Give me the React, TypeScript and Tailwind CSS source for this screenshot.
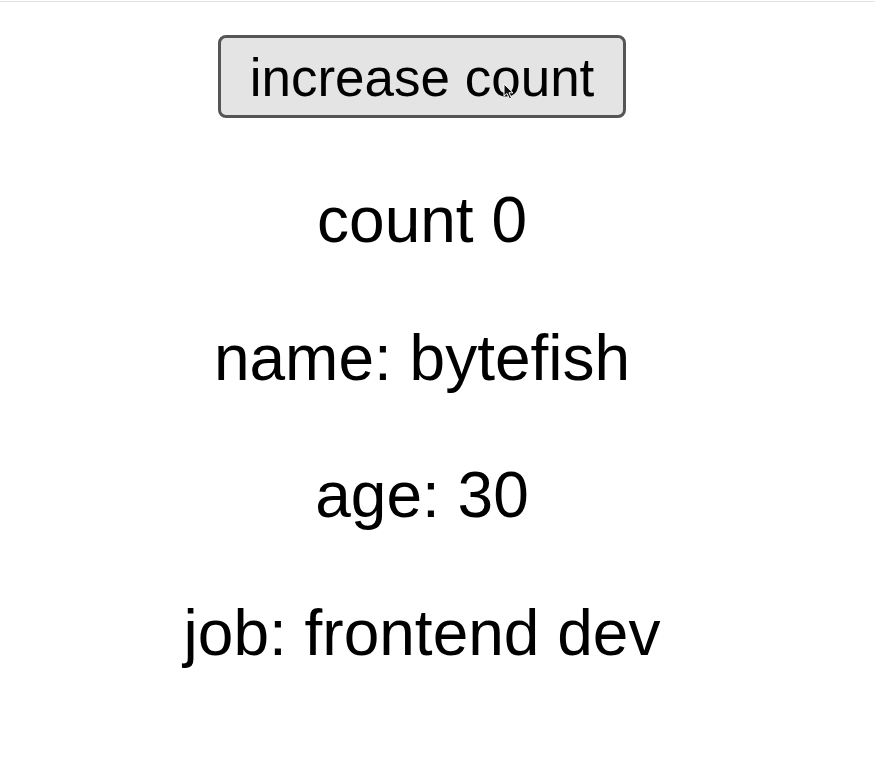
import React, { useState } from "react";

const App = () => {
  const [count, setCount] = useState(0);
  const user = { name: "bytefish", age: 30, job: "frontend dev" };

  return (
    <div
      className="min-h-[762px] bg-white text-black"
      style={{ fontFamily: '"Liberation Sans", Arial, sans-serif' }}
    >
      <div className="mt-px h-px w-full bg-[#e3e3e3]" />
      <div className="flex w-[844px] flex-col items-center">
        <div className="relative mt-[33px]">
          <button
            onClick={() => setCount(count + 1)}
            className="flex h-[83px] w-[408px] items-center justify-center rounded-[8px] border-[3px] border-[#555555] bg-[#e4e4e4] pt-px text-[53px] leading-none text-black"
          >
            increase count
          </button>
          {/* mouse pointer caught in the screenshot */}
          <svg
            className="pointer-events-none absolute left-[285px] top-[48px]"
            width="12"
            height="17"
            viewBox="0 0 12 17"
          >
            <path
              d="M1 1 L1 13 L4 10.5 L6.5 16 L8.5 15 L6 9.8 L10 9.8 Z"
              fill="#111"
              stroke="#fff"
              strokeWidth="1"
              strokeLinejoin="round"
            />
          </svg>
        </div>
        <div className="mt-[66px] flex flex-col items-center gap-[64px] text-[64px] leading-[1.149]">
          <p>count {count}</p>
          <p>name: {user.name}</p>
          <p>age: {user.age}</p>
          <p>job: {user.job}</p>
        </div>
      </div>
    </div>
  );
};

export default App;
